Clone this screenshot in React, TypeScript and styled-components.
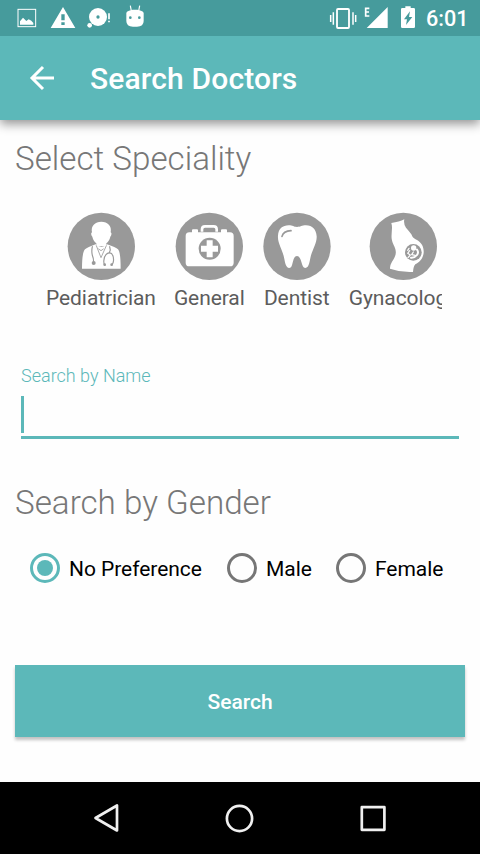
import React, { useState } from 'react';
import styled, { createGlobalStyle } from 'styled-components';

const teal = '#5cb8b9';

const GlobalStyle = createGlobalStyle`
  * { box-sizing: border-box; }
  body { margin: 0; background: #fff; font-family: Roboto, sans-serif; }
  button { font-family: inherit; }
`;

const Screen = styled.div`
  width: 480px;
  height: 854px;
  display: flex;
  flex-direction: column;
  overflow: hidden;
  background: #fefefe;
`;

const StatusBar = styled.div`
  height: 36px;
  flex: none;
  z-index: 1;
  display: flex;
  align-items: flex-start;
  justify-content: space-between;
  padding: 0 11px 0 15px;
  background: #469b9c;
  color: #fff;
`;

const StatusGroup = styled.div`
  display: flex;
  align-items: flex-start;
`;

const StatusIcon = styled.svg<{ $gap?: number }>`
  display: block;
  height: 36px;
  margin-left: ${(p) => p.$gap ?? 0}px;
`;

const Clock = styled.span`
  width: 43px;
  margin-left: 10px;
  font-size: 21.6px;
  font-weight: 500;
  line-height: 37px;
  white-space: nowrap;
`;

const AppBar = styled.header`
  height: 84px;
  flex: none;
  display: flex;
  align-items: center;
  padding-left: 24px;
  background: ${teal};
  color: #fff;
  box-shadow: 0 4px 10px rgba(0, 0, 0, 0.42);
`;

const BackButton = styled.button`
  width: 36px;
  height: 36px;
  padding: 0;
  border: 0;
  background: none;
  color: inherit;
`;

const Title = styled.h1`
  margin: 1px 0 0 30px;
  font-size: 30px;
  font-weight: 500;
  line-height: 40px;
  letter-spacing: 0.14px;
`;

const Content = styled.main`
  flex: 1;
  display: flex;
  flex-direction: column;
  padding: 18px 15px 0;
`;

const SectionTitle = styled.h2<{ $top?: number }>`
  margin: ${(p) => p.$top ?? 0}px 0 0;
  font-size: 33.2px;
  font-weight: 300;
  line-height: 42px;
  color: #777;
  white-space: nowrap;
`;

const SpecialityStrip = styled.div`
  display: flex;
  gap: 18px;
  width: 396px;
  margin: 32px 0 0 31px;
  overflow: hidden;
`;

const Speciality = styled.div`
  flex: none;
  display: flex;
  flex-direction: column;
  align-items: center;
`;

const SpecialityIcon = styled.svg`
  display: block;
  width: 68px;
  height: 68px;
`;

const SpecialityLabel = styled.span`
  margin-top: 4px;
  font-size: 21px;
  line-height: 28px;
  letter-spacing: -0.08px;
  color: #5c5c5c;
`;

const Field = styled.label`
  display: block;
  margin: 52px 6px 0;
`;

const FieldLabel = styled.span`
  display: block;
  font-size: 18px;
  font-weight: 300;
  line-height: 24px;
  color: ${teal};
`;

const FieldLine = styled.div`
  height: 51px;
  padding-top: 8px;
  border-bottom: 3px solid ${teal};
`;

const Caret = styled.div`
  width: 3px;
  height: 37px;
  background: ${teal};
`;

const RadioGroup = styled.div`
  display: flex;
  margin: 29px 0 0 15px;
`;

const Radio = styled.button<{ $width: number }>`
  display: flex;
  align-items: center;
  gap: 9px;
  width: ${(p) => p.$width}px;
  height: 30px;
  padding: 0;
  border: 0;
  background: none;
  color: #000;
  font-size: 21px;
  line-height: 30px;
  letter-spacing: -0.05px;
  white-space: nowrap;
`;

const RadioLabel = styled.span`
  padding-top: 1px;
`;

const Ring = styled.span<{ $on: boolean }>`
  flex: none;
  display: flex;
  align-items: center;
  justify-content: center;
  width: 30px;
  height: 30px;
  border: 3px solid ${(p) => (p.$on ? teal : '#767676')};
  border-radius: 50%;
  &::after {
    content: '';
    width: 16px;
    height: 16px;
    border-radius: 50%;
    background: ${(p) => (p.$on ? teal : 'transparent')};
  }
`;

const SearchButton = styled.button`
  height: 72px;
  margin-top: 82px;
  padding-top: 3px;
  border: 0;
  background: ${teal};
  color: #fff;
  font-size: 21px;
  font-weight: 500;
  box-shadow: 0 3px 3px rgba(0, 0, 0, 0.24);
`;

const NavBar = styled.nav`
  height: 72px;
  flex: none;
  display: flex;
  align-items: center;
  justify-content: space-between;
  padding: 0 92px 0 91px;
  background: #000;
`;

const NavIcon = styled.svg`
  display: block;
  width: 30px;
  height: 30px;
  fill: none;
  stroke: #f0f0f0;
  stroke-width: 2.7;
  stroke-linejoin: round;
`;

const grey = '#999';

const Doctor = () => (
  <SpecialityIcon viewBox="82 21 204 204">
    <circle cx="185" cy="124" r="101" fill={grey} />
    <path fill="#fff" d="M157 82C153 63 166 50 185 50s32 13 28 32c4 1 3 9-1 13-2 10-7 16-12 20v9h-30v-9c-5-4-10-10-12-20-4-4-5-12-1-13Z" />
    <path fill="#fff" d="M168 118Q186 134 202 118Q229 127 235 133Q243 141 243 191H127Q127 142 136 133Q143 127 168 118Z" />
    <g fill="none" stroke={grey} strokeWidth="3.5" strokeLinecap="round">
      <path d="M158 125Q155 139 158 151Q162 160 162 173" />
      <path d="M170 122L184 158L200 122M177 132L184 137L191 132" strokeWidth="2.5" />
      <path d="M210 125Q214 134 209 143" />
      <path d="M196 180C190 177 192 156 199 149C205 141 216 142 219 151C223 159 223 177 215 180" />
    </g>
    <circle cx="162" cy="174" r="6" fill={grey} />
    <circle cx="195" cy="179" r="4" fill={grey} />
    <circle cx="216" cy="179" r="4" fill={grey} />
  </SpecialityIcon>
);

const MedicalBag = () => (
  <SpecialityIcon viewBox="403 21 204 204">
    <circle cx="506" cy="124" r="101" fill={grey} />
    <path d="M484 80V73Q484 64 493 64H519Q528 64 528 73V80" fill="none" stroke="#fff" strokeWidth="8" />
    <path fill="#fff" d="M454 82V76Q454 73 457 73H469Q472 73 472 76V82H541V76Q541 73 544 73H556Q559 73 559 76V82H568Q579 82 579 93V173Q579 184 568 184H446Q435 184 435 173V93Q435 82 446 82Z" />
    <circle cx="507" cy="131" r="33" fill={grey} />
    <path fill="#fff" d="M498 106H516V122H532V140H516V157H498V140H481V122H498Z" />
  </SpecialityIcon>
);

const Tooth = () => (
  <SpecialityIcon viewBox="37 21 204 204">
    <circle cx="139" cy="124" r="101" fill={grey} />
    <path fill="#fff" d="M82 92C83 71 96 61 114 61C126 61 130 66 139 66C149 66 153 61 166 61C185 61 197 74 198 94C199 112 187 132 181 151C177 166 176 189 164 189C151 189 154 153 139 153C124 153 129 189 116 189C104 189 103 169 99 153C94 132 80 113 82 92Z" />
    <path d="M94 94Q98 78 121 77" fill="none" stroke={grey} strokeWidth="5" strokeLinecap="round" />
  </SpecialityIcon>
);

const Pregnancy = () => (
  <SpecialityIcon viewBox="354 21 204 204">
    <circle cx="457" cy="124" r="101" fill={grey} />
    <path fill="#fff" d="M421 54Q445 51 460 43Q457 57 465 68Q474 78 481 88C486 100 490 101 498 105C512 113 519 126 518 143C516 161 506 171 493 178Q487 184 486 201Q451 203 417 191Q416 182 423 170C431 158 436 149 434 137C433 125 424 116 422 101C420 84 426 70 421 54Z" />
    <circle cx="487" cy="142" r="25" fill={grey} />
    <circle cx="488" cy="129" r="8" fill="#fff" />
    <path d="M498 134Q504 142 498 150Q491 159 480 158" fill="none" stroke="#fff" strokeWidth="6" strokeLinecap="round" />
    <path d="M487 141L482 149L493 151M476 137L470 145L478 150L471 158M474 130L470 136" fill="none" stroke="#fff" strokeWidth="3.6" strokeLinecap="round" strokeLinejoin="round" />
  </SpecialityIcon>
);

const specialities = [
  { name: 'Pediatrician', Icon: Doctor },
  { name: 'General', Icon: MedicalBag },
  { name: 'Dentist', Icon: Tooth },
  { name: 'Gynacology', Icon: Pregnancy },
];

const genders = [
  { name: 'No Preference', width: 197 },
  { name: 'Male', width: 109 },
  { name: 'Female', width: 110 },
];

export default function App() {
  const [gender, setGender] = useState('No Preference');
  return (
    <Screen>
      <GlobalStyle />
      <StatusBar>
        <StatusGroup>
          <StatusIcon width="24" viewBox="45 0 72 108">
            <rect x="54" y="28" width="53" height="52" fill="none" stroke="#fff" strokeWidth="3" />
            <path fill="#fff" d="M60 74V64L69 53L79 63L86 58L94 62L100 69V74Z" />
          </StatusIcon>
          <StatusIcon width="26" $gap={11} viewBox="150 0 78 108">
            <path fill="#fff" fillRule="evenodd" d="M189 21L226 84H152ZM184 43V61H194V43ZM184 67V75H194V67Z" />
          </StatusIcon>
          <StatusIcon width="26" $gap={10} viewBox="258 0 78 108">
            <circle cx="294" cy="51" r="27" fill="#fff" />
            <circle cx="294" cy="51" r="5" fill="#469b9c" />
            <circle cx="269" cy="76" r="7" fill="#fff" />
            <path d="M327 40V58M327 62V67" stroke="#fff" strokeWidth="5" />
          </StatusIcon>
          <StatusIcon width="22" $gap={12} viewBox="372 0 66 108">
            <path fill="#fff" d="M379 39Q379 34 387 32L398 29H412L423 32Q431 34 431 39V63Q431 80 411 80H399Q379 80 379 63Z" />
            <path d="M394 33L391 17M416 33L419 17" stroke="#fff" strokeWidth="3.5" />
            <circle cx="391" cy="53" r="4" fill="#469b9c" />
            <circle cx="418" cy="53" r="4" fill="#469b9c" />
          </StatusIcon>
        </StatusGroup>
        <StatusGroup>
          <StatusIcon width="28" viewBox="28 0 84 108">
            <rect x="52" y="27" width="36" height="57" rx="3" fill="none" stroke="#fff" strokeWidth="5.5" />
            <path d="M41 37V74M100 37V74M33 45V66M108 45V66" stroke="#fff" strokeWidth="4.5" />
          </StatusIcon>
          <StatusIcon width="25" $gap={7} viewBox="133 0 75 108">
            <path d="M149 25H138V48H149M138 36H148" fill="none" stroke="#fff" strokeWidth="5" />
            <path fill="#fff" d="M204 21V84H141Z" />
          </StatusIcon>
          <StatusIcon width="16" $gap={11} viewBox="240 0 48 108">
            <path fill="#fff" d="M256 19H272V24H281Q285 24 285 28V80Q285 84 281 84H247Q243 84 243 80V28Q243 24 247 24H256Z" />
            <path fill="#469b9c" d="M270 34L252 58H261L258 75L277 51H267Z" />
          </StatusIcon>
          <Clock>6:01</Clock>
        </StatusGroup>
      </StatusBar>
      <AppBar>
        <BackButton aria-label="Back">
          <svg width="36" height="36" viewBox="0 0 36 36" fill="none" stroke="#fff" strokeWidth="3">
            <path d="M30 18H8M19 7L8 18L19 29" />
          </svg>
        </BackButton>
        <Title>Search Doctors</Title>
      </AppBar>
      <Content>
        <SectionTitle>Select Speciality</SectionTitle>
        <SpecialityStrip>
          {specialities.map(({ name, Icon }) => (
            <Speciality key={name}>
              <Icon />
              <SpecialityLabel>{name}</SpecialityLabel>
            </Speciality>
          ))}
        </SpecialityStrip>
        <Field>
          <FieldLabel>Search by Name</FieldLabel>
          <FieldLine>
            <Caret />
          </FieldLine>
        </Field>
        <SectionTitle $top={43}>Search by Gender</SectionTitle>
        <RadioGroup role="radiogroup">
          {genders.map((g) => (
            <Radio
              key={g.name}
              role="radio"
              aria-checked={gender === g.name}
              $width={g.width}
              onClick={() => setGender(g.name)}
            >
              <Ring $on={gender === g.name} />
              <RadioLabel>{g.name}</RadioLabel>
            </Radio>
          ))}
        </RadioGroup>
        <SearchButton>Search</SearchButton>
      </Content>
      <NavBar>
        <NavIcon viewBox="0 0 30 30">
          <path d="M26 2.5V27.500L4.500 15Z" />
        </NavIcon>
        <NavIcon viewBox="0 0 30 30">
          <circle cx="14.500" cy="15.500" r="12.600" />
        </NavIcon>
        <NavIcon viewBox="0 0 30 30">
          <rect x="3.800" y="4.200" width="22.600" height="22.600" />
        </NavIcon>
      </NavBar>
    </Screen>
  );
}
